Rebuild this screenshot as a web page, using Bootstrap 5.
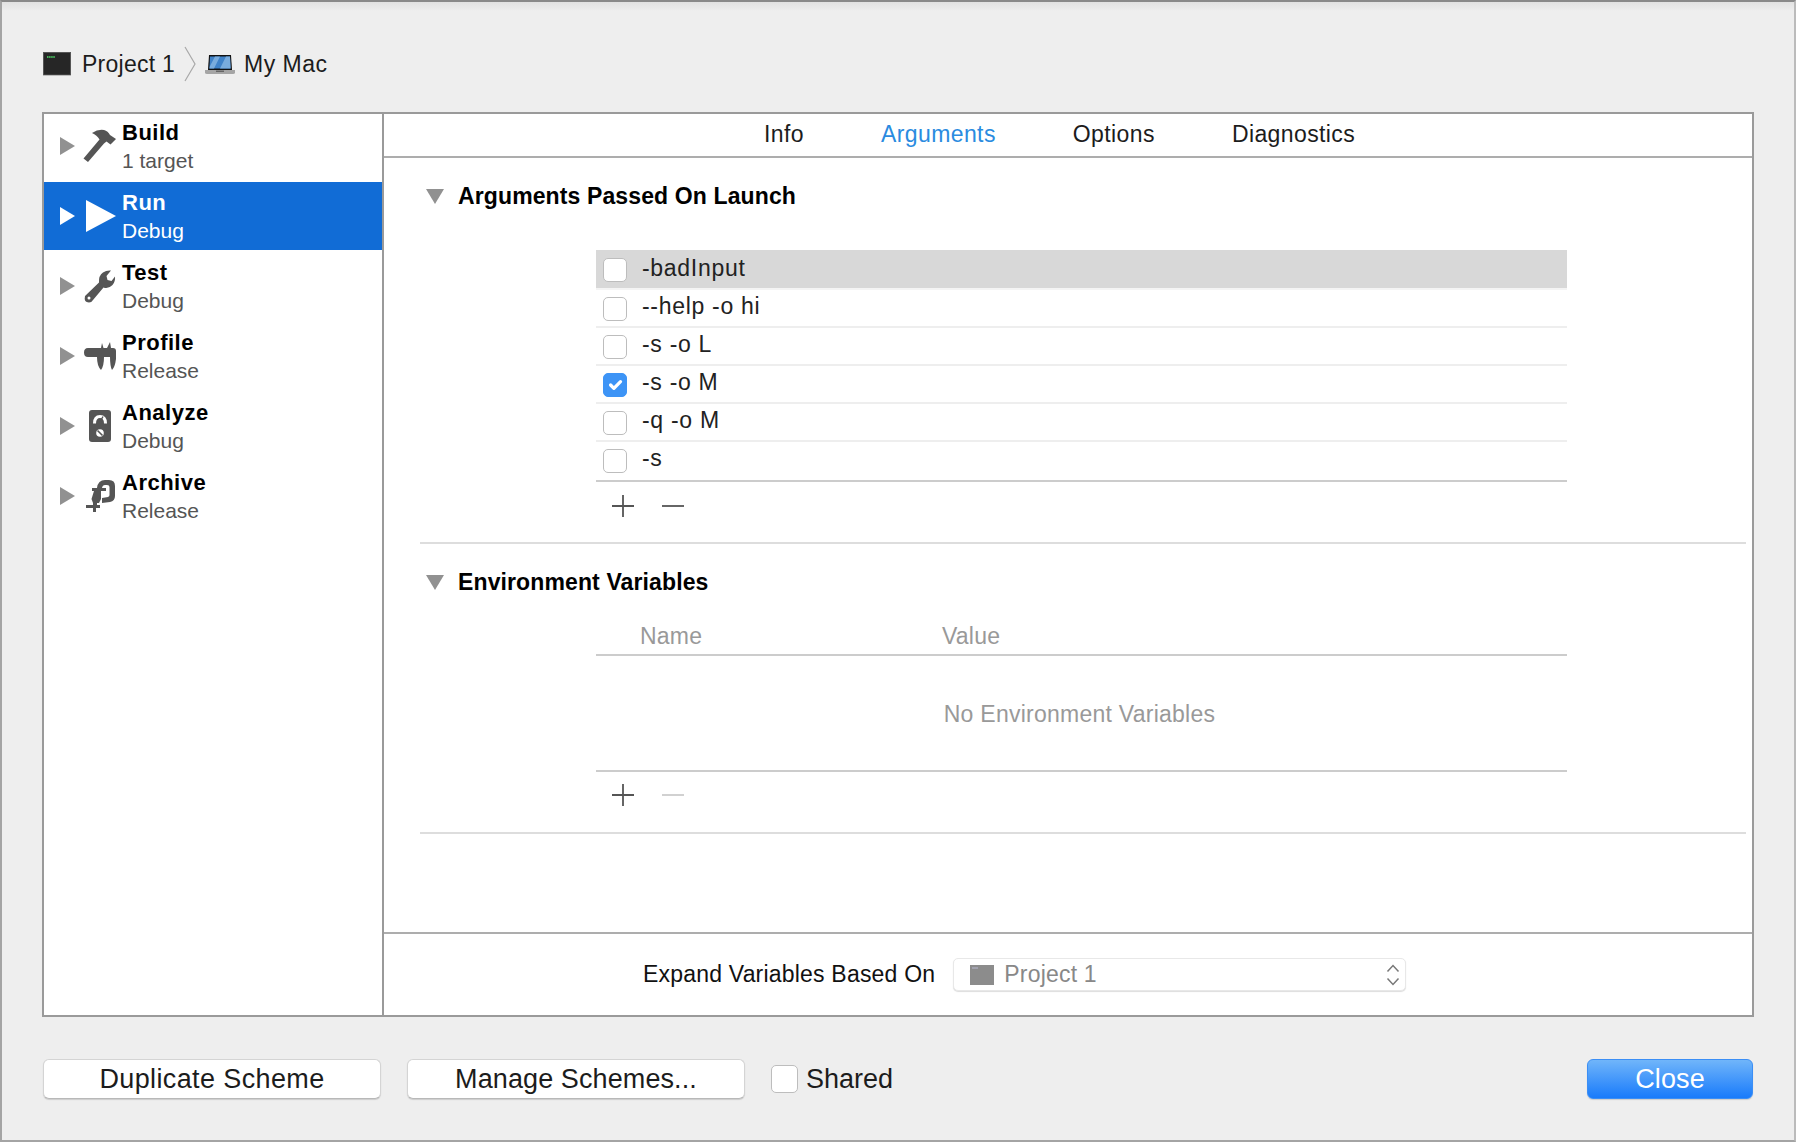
<!DOCTYPE html>
<html lang="en"><head><meta charset="utf-8"><title>Scheme</title>
<link rel="stylesheet" href="https://cdn.jsdelivr.net/npm/bootstrap@5.3.0/dist/css/bootstrap.min.css">
<style>
html,body{margin:0;background:#eee;font-family:"Liberation Sans",Arial,sans-serif;color:#1c1c1c}
.win{position:relative;width:1796px;height:1142px;background:linear-gradient(#e2e2e2,#eee 9px);border:2px solid #a4a4a4;border-top-color:#8a8a8a;border-right-color:#bbb;overflow:hidden}
.ticks{position:absolute;left:-2px;top:24px;width:2px;height:12px;background:repeating-linear-gradient(#000 0 2px,transparent 2px 5px)}
.crumb{height:110px;padding:14px 0 0 41px;font-size:23px;letter-spacing:.25px}
.crumb-a{margin-left:11px}
.crumb-s{margin:0 9px 0 9px}
.crumb-b{margin-left:9px;letter-spacing:.5px}
.pane{height:905px;margin:0 40px;border:2px solid #9a9a9a;background:#fff}
.side{width:340px;border-right:2px solid #9a9a9a;flex:none}
.side-list{margin-top:-2px}
.sch{height:68px;margin-bottom:2px;color:#555;padding-left:16px}
.sch.on{background:#116cd6;color:#fff}
.sch .arr{width:15px;height:18px;flex:none}
.sch .ico{width:34px;height:34px;flex:none;margin:0 6px 0 7px}
.sch b{display:block;font-size:22px;line-height:28px;color:#000;letter-spacing:.5px}
.sch.on b{color:#fff}
.sch span{display:block;font-size:21px;line-height:26px;margin-top:1px}
.tabs{height:44px;border-bottom:2px solid #adadad;padding:0 0 1px 380px;gap:77px;font-size:23px;letter-spacing:.4px;flex:none}
.tabs .act{color:#2a8be0}
.body-a{flex:1 1 auto;padding:0 6px 0 36px}
.sect{padding-left:6px}
.sect-h{font-size:23px;font-weight:700;color:#000;line-height:28px;letter-spacing:.12px}
.sect-h svg{margin-right:14px;flex:none}
.h1a{padding-top:24px}
.h1b{margin-top:24px}
.tbl{margin:40px 0 0 170px;width:971px}
.tbl-b{margin-top:0}
.arow{height:38px;border-bottom:2px solid #eee;padding-left:7px;font-size:23px;letter-spacing:.7px;color:#222}
.arow.sel{height:40px;background:#d8d8d8;border-bottom-color:#f4f4f4}
.arow.end{height:40px;padding-bottom:2px;border-bottom-color:#ccc}
.arow span{margin-left:15px;position:relative;top:-2px}
.arow.sel span{top:-1px}
.cb.form-check-input{width:24px;height:24px;margin:0;border:1px solid #bdbdbd;border-radius:5px;background-color:#fff;box-shadow:none;flex:none}
.arow .cb.form-check-input{margin-top:2px}
.cb.form-check-input:checked{background-color:#3d94f6;border-color:#3d94f6}
.pm{height:47px;padding-left:16px;gap:28px}
.pm-b{height:46px}
.rule1{height:2px;background:#ddd;margin:13px 0 0 -6px}
.rule1.r2{margin-top:14px}
.thead{height:40px;border-bottom:2px solid #ccc;font-size:23px;letter-spacing:.2px;color:#999;margin-top:20px;padding-top:2px}
.thead .n1{margin-left:44px;width:302px}
.none{height:116px;font-size:23px;letter-spacing:.25px;color:#999;padding:2px 4px 0 0;border-bottom:2px solid #ccc}
.foot{height:83px;border-top:2px solid #adadad;flex:none;padding-left:259px;font-size:23px;letter-spacing:.2px;color:#111}
.sel-box{width:453px;height:33px;margin-left:18px;background:#fff;border:1px solid #e8e8e8;border-radius:5px;box-shadow:0 1px 1px #ddd;color:#888;padding:0 5px 0 16px}
.sel-box .t{margin-left:10px}
.bar{padding:42px 41px 0 41px}
.mac.btn{width:338px;height:40px;padding:0;background:#fff;border:1px solid #d4d4d4;border-bottom-color:#b8b8b8;border-radius:6px;font-size:27px;letter-spacing:.1px;color:#1c1c1c;line-height:1;box-shadow:0 1px 1px #ccc}
.mac.btn.dup{letter-spacing:.38px}
.mac.btn.m2{margin-left:26px}
.shared{margin-left:26px;font-size:27px;color:#1c1c1c}
.cb.cb-l{width:27px;height:28px}
.shared span{margin-left:8px}
.mac.btn.pri{width:166px;color:#fff;border:1px solid #3b8ef5;background:linear-gradient(#70b5fa,#197bfb)}
</style></head><body>
<div class="win d-flex flex-column">
 <div class="ticks"></div>
 <div class="crumb d-flex align-items-center">
  <svg width="28" height="24" viewBox="0 0 28 24"><rect x=".5" y=".5" width="27" height="22.500" fill="#262626" stroke="#555"/><rect y="23" width="28" height="1" fill="#bbb"/><path d="M4 5h8" stroke="#46b45a" stroke-width="2" stroke-dasharray="1.500 .6"/></svg>
  <span class="crumb-a">Project 1</span>
  <svg class="crumb-s" width="12" height="36" viewBox="0 0 12 36"><path d="M1 1 11 18 1 35" fill="none" stroke="#a8a8a8" stroke-width="1.200"/></svg>
  <svg width="30" height="21" viewBox="0 0 30 21"><path d="M4 1h22l1 15H3z" fill="#111"/><path d="M5 2.500h20l.6 12H4.400z" fill="#3f82c8"/><path d="M15 14.500 21 2.500h4l.6 12zM5 12 10 2.500H15L9 14.500H4.400z" fill="#79acdd"/><path d="M0 16h30v2.500q0 1.500-2 1.500H2q-2 0-2-1.500z" fill="#a5a5a5"/><path d="M11 16.500h8v1.500h-8z" fill="#666"/></svg>
  <span class="crumb-b">My Mac</span>
 </div>
 <div class="pane d-flex">
  <div class="side">
   <div class="side-list">
    <div class="sch d-flex align-items-center">
     <svg class="arr" viewBox="0 0 15 18"><path d="M0 0 15 9 0 18z" fill="#919191"/></svg>
     <svg class="ico" viewBox="0 0 34 34"><path d="M1.500 29.500 17.500 10.500Q15 6 10 4 16 0 22 1 26 2 28 6L34 10 28.500 15.500 24.500 12.500 22 14.500 6 33z" fill="#555"/></svg>
     <div><b>Build</b><span>1 target</span></div>
    </div>
    <div class="sch on d-flex align-items-center">
     <svg class="arr" viewBox="0 0 15 18"><path d="M0 0 15 9 0 18z" fill="#fff"/></svg>
     <svg class="ico" viewBox="0 0 34 34"><path d="M4 1 34 17 4 33z" fill="#fff"/></svg>
     <div><b>Run</b><span>Debug</span></div>
    </div>
    <div class="sch d-flex align-items-center">
     <svg class="arr" viewBox="0 0 15 18"><path d="M0 0 15 9 0 18z" fill="#919191"/></svg>
     <svg class="ico" viewBox="0 0 34 34"><path d="M7 33.500Q1.500 33.500 3 27L17 13.500Q16.500 6.500 21 3.500 24.500 1 29 1.500L24.500 7 25.500 11 29.500 12 33 7.500Q33.500 12.500 30.500 16 26 20.500 21.500 18.500L11 31Q9.500 33.500 7 33.500Z" fill="#555"/><circle cx="7" cy="29" r="1.500" fill="#fff"/></svg>
     <div><b>Test</b><span>Debug</span></div>
    </div>
    <div class="sch d-flex align-items-center">
     <svg class="arr" viewBox="0 0 15 18"><path d="M0 0 15 9 0 18z" fill="#919191"/></svg>
     <svg class="ico" viewBox="0 0 34 34"><path d="M6 9H19L20 4 21.500 9H25L28 3 29 9H31Q34 9 34 12V20Q33 28 30 31 28 27 28 18H22Q22 27 19 31 15 27 15 18H6Q2 18 2 13.500 2 9 6 9Z" fill="#555"/></svg>
     <div><b>Profile</b><span>Release</span></div>
    </div>
    <div class="sch d-flex align-items-center">
     <svg class="arr" viewBox="0 0 15 18"><path d="M0 0 15 9 0 18z" fill="#919191"/></svg>
     <svg class="ico" viewBox="0 0 34 34"><rect x="7" y="1" width="22" height="32" rx="3" fill="#555"/><path d="M12.500 14.500Q12.500 7.500 18 7.500T23.500 14.500" fill="none" stroke="#fff" stroke-width="3"/><path d="M18 13 21 7.500" stroke="#555" stroke-width="1.400"/><circle cx="18" cy="24" r="3.800" fill="#fff"/><path d="M15.500 21.500 20.500 26.500" stroke="#555" stroke-width="1.600"/></svg>
     <div><b>Analyze</b><span>Debug</span></div>
    </div>
    <div class="sch d-flex align-items-center">
     <svg class="arr" viewBox="0 0 15 18"><path d="M0 0 15 9 0 18z" fill="#919191"/></svg>
     <svg class="ico" viewBox="0 0 34 34"><path d="M10 9H15Q16 1 23 1H27Q33 1 33 7V17Q33 22 28 23L20 24V19L26 18Q27.500 17.500 27.500 16V8Q27.500 6 25 6H23Q20.500 6 20 9H24V12H19V20L17 24H15V26H18V29H14V33H11V29H4V26H11V24L9.500 20 12 12H10Z" fill="#555"/></svg>
     <div><b>Archive</b><span>Release</span></div>
    </div>
   </div>
  </div>
  <div class="flex-grow-1 d-flex flex-column">
   <div class="tabs d-flex align-items-center"><span>Info</span><span class="act">Arguments</span><span>Options</span><span>Diagnostics</span></div>
   <div class="body-a">
    <div class="sect">
     <div class="sect-h h1a d-flex align-items-center"><svg width="18" height="15" viewBox="0 0 18 15"><path d="M0 0h18L9 15z" fill="#919191"/></svg>Arguments Passed On Launch</div>
     <div class="tbl">
      <div class="arow sel d-flex align-items-center"><input class="cb form-check-input" type="checkbox" aria-label="-badInput"><span>-badInput</span></div>
      <div class="arow d-flex align-items-center"><input class="cb form-check-input" type="checkbox" aria-label="--help -o hi"><span>--help -o hi</span></div>
      <div class="arow d-flex align-items-center"><input class="cb form-check-input" type="checkbox" aria-label="-s -o L"><span>-s -o L</span></div>
      <div class="arow d-flex align-items-center"><input class="cb form-check-input" type="checkbox" checked aria-label="-s -o M"><span>-s -o M</span></div>
      <div class="arow d-flex align-items-center"><input class="cb form-check-input" type="checkbox" aria-label="-q -o M"><span>-q -o M</span></div>
      <div class="arow end d-flex align-items-center"><input class="cb form-check-input" type="checkbox" aria-label="-s"><span>-s</span></div>
      <div class="pm d-flex align-items-center">
       <svg width="22" height="22" viewBox="0 0 22 22"><path d="M0 11h22M11 0v22" stroke="#555" stroke-width="1.800"/></svg>
       <svg width="22" height="22" viewBox="0 0 22 22"><path d="M0 11h22" stroke="#555" stroke-width="1.800"/></svg>
      </div>
     </div>
     <div class="rule1"></div>
     <div class="sect-h h1b d-flex align-items-center"><svg width="18" height="15" viewBox="0 0 18 15"><path d="M0 0h18L9 15z" fill="#919191"/></svg>Environment Variables</div>
     <div class="tbl tbl-b">
      <div class="thead d-flex align-items-center"><span class="n1">Name</span><span>Value</span></div>
      <div class="none d-flex align-items-center justify-content-center">No Environment Variables</div>
      <div class="pm pm-b d-flex align-items-center">
       <svg width="22" height="22" viewBox="0 0 22 22"><path d="M0 11h22M11 0v22" stroke="#555" stroke-width="1.800"/></svg>
       <svg width="22" height="22" viewBox="0 0 22 22"><path d="M0 11h22" stroke="#ccc" stroke-width="1.800"/></svg>
      </div>
     </div>
     <div class="rule1 r2"></div>
    </div>
   </div>
   <div class="foot d-flex align-items-center">
    <span>Expand Variables Based On</span>
    <div class="sel-box d-flex align-items-center">
     <svg width="24" height="20" viewBox="0 0 24 20"><rect width="24" height="20" fill="#8c8c8c"/><path d="M2 3h6" stroke="#aab" stroke-width="1.500"/></svg>
     <span class="t flex-grow-1">Project 1</span>
     <svg width="14" height="22" viewBox="0 0 14 22"><path d="M1.500 7.500 7 1.500l5.500 6M1.500 14.500 7 20.500l5.500-6" fill="none" stroke="#777" stroke-width="1.500"/></svg>
    </div>
   </div>
  </div>
 </div>
 <div class="bar d-flex align-items-center">
  <button type="button" class="btn mac dup">Duplicate Scheme</button>
  <button type="button" class="btn mac m2">Manage Schemes...</button>
  <label class="shared d-flex align-items-center"><input class="cb cb-l form-check-input" type="checkbox"><span>Shared</span></label>
  <button type="button" class="btn mac pri ms-auto">Close</button>
 </div>
</div>
<script src="https://cdn.jsdelivr.net/npm/bootstrap@5.3.0/dist/js/bootstrap.bundle.min.js"></script>
</body></html>
